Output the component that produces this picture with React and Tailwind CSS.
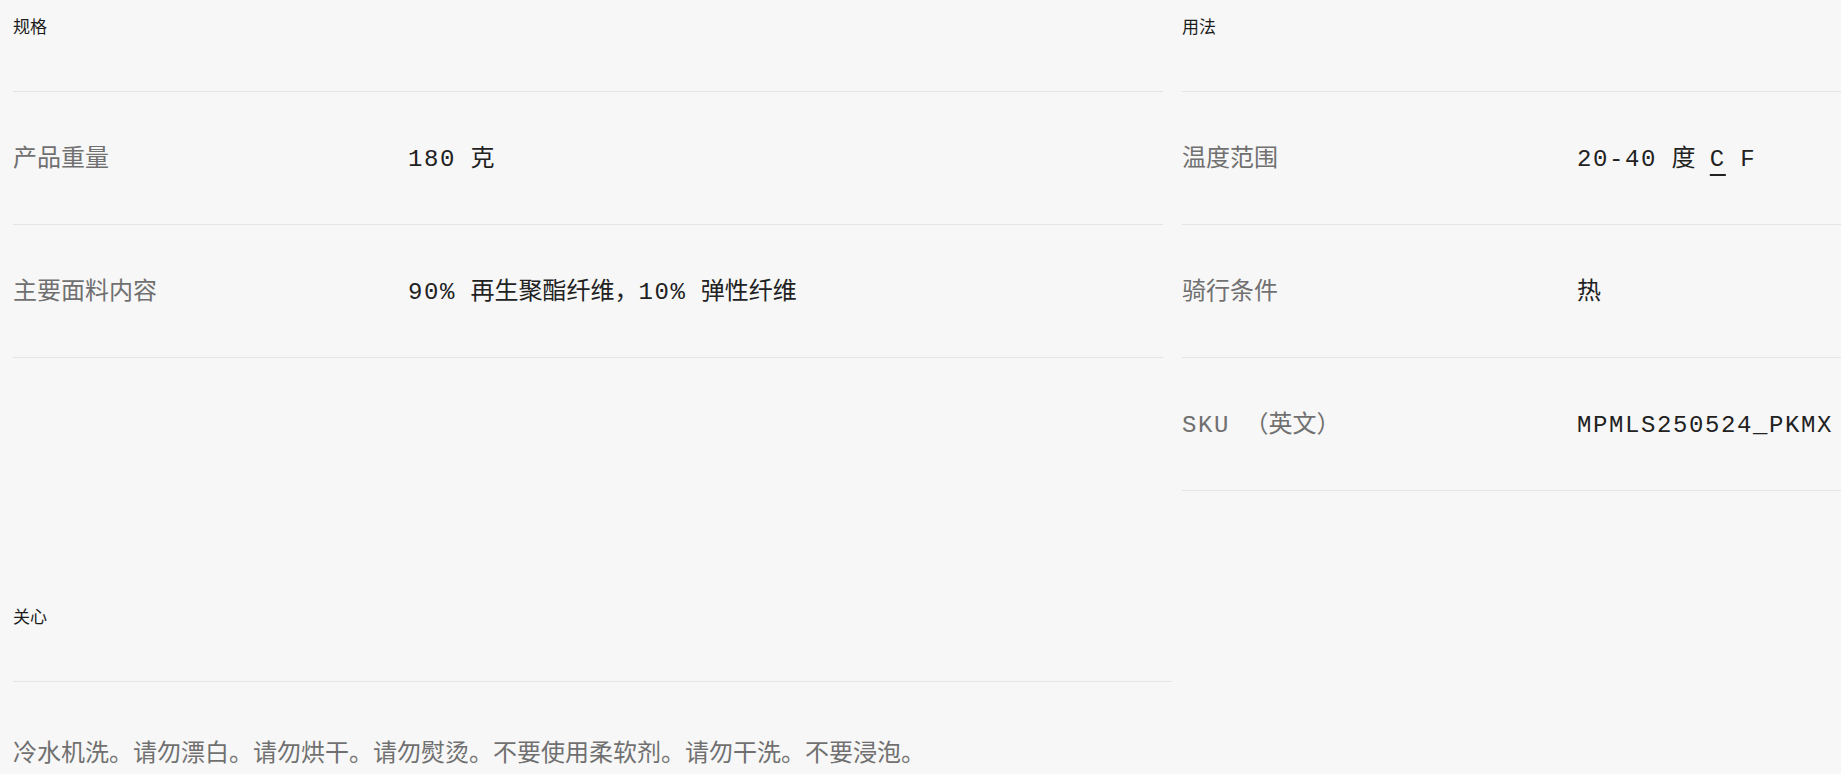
const specs = [
  { label: '产品重量', value: <><M>180</M> 克</> },
  { label: '主要面料内容', value: <><M>90%</M> 再生聚酯纤维，<M>10%</M> 弹性纤维</> },
]

const usage = [
  {
    label: '温度范围',
    value: (
      <>
        <M>20-40</M> 度{' '}
        <button type="button" className="underline decoration-2 underline-offset-[8px] tracking-[1.6px]">C</button>{' '}
        <button type="button" className="tracking-[1.6px]">F</button>
      </>
    ),
  },
  { label: '骑行条件', value: '热' },
  { label: <><M>SKU</M> （英文）</>, value: <M>MPMLS250524_PKMX</M> },
]

// latin runs get a little tracking so the mono digits line up with the reference
function M({ children }) {
  return <span className="tracking-[1.6px]">{children}</span>
}

function Heading({ children }) {
  return (
    <h3 className="pt-[14px] pb-[53px] text-[17px] leading-6 text-[#1c1c1c] border-b border-[#e4e4e4] font-['Noto_Sans_CJK_SC',sans-serif]">
      {children}
    </h3>
  )
}

function SpecTable({ title, rows }) {
  return (
    <div className="min-w-0">
      <Heading>{title}</Heading>
      {rows.map((row, i) => (
        <div key={i} className="flex items-center h-[133px] pt-[4px] border-b border-[#e4e4e4] text-[24px] leading-8">
          <div className="w-[395px] shrink-0 text-[#707070]">{row.label}</div>
          <div className="text-[#222] whitespace-nowrap">{row.value}</div>
        </div>
      ))}
    </div>
  )
}

export default function App() {
  return (
    <div className="w-[1841px] h-[774px] overflow-hidden bg-[#f7f7f7] font-['Liberation_Mono','Noto_Sans_CJK_SC',monospace]">
      <div className="pl-[13px] grid grid-cols-[1150px_1150px] gap-x-[19px] items-start">
        <SpecTable title="规格" rows={specs} />
        <SpecTable title="用法" rows={usage} />
      </div>

      <section className="ml-[13px] mt-[99px] w-[1159px]">
        <Heading>关心</Heading>
        <p className="flex items-center h-[133px] pt-[4px] text-[24px] leading-8 text-[#707070] font-['Noto_Sans_CJK_SC',sans-serif]">
          冷水机洗。请勿漂白。请勿烘干。请勿熨烫。不要使用柔软剂。请勿干洗。不要浸泡。
        </p>
      </section>
    </div>
  )
}
